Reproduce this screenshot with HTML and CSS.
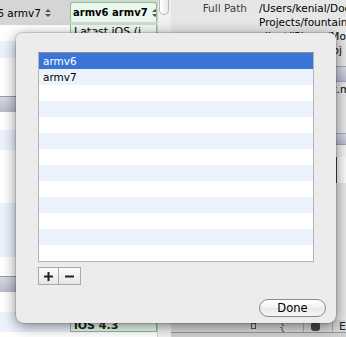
FILE: index.html
```html
<!DOCTYPE html>
<html>
<head>
<meta charset="utf-8">
<link rel="stylesheet" href="styles.css">
</head>
<body>
<div class="window">
  <div class="table">
    <div class="row r-top">
      <div class="c1"><span class="clip">6 armv7</span><svg class="ud" width="6" height="10" viewBox="0 0 6 10"><path d="M0 4 L3 1 L6 4Z M0 6 L3 9 L6 6Z" fill="#555"/></svg></div>
      <div class="c2"><div class="popup"><span>armv6 armv7</span><svg class="ud" width="6" height="10" viewBox="0 0 6 10"><path d="M0 4 L3 1 L6 4Z M0 6 L3 9 L6 6Z" fill="#555"/></svg></div></div>
    </div>
    <div class="row white h16"><div class="c1"></div><div class="c2"><div class="gcell">Latest iOS (i<svg class="chev" width="18" height="8" viewBox="0 0 18 8"><path d="M0.5 8 L9 1 L17.5 8" fill="#fff" stroke="#9a9a9a"/></svg></div></div></div>
    <div class="row blue h17"></div>
    <div class="row white h38"></div>
    <div class="row hdr h16"></div>
    <div class="row white h18"></div>
    <div class="row blue h20"></div>
    <div class="row white h53"></div>
    <div class="row blue h54"></div>
    <div class="row white h19"></div>
    <div class="row hdr h16"></div>
    <div class="row white h20"></div>
    <div class="row blue h20"><div class="c1"></div><div class="c2"><div class="gcell low">iOS 4.3</div></div></div>
    <div class="row white h5"></div>
  </div>
  <div class="vscroll"><div class="knob"></div></div>
  <div class="info">
    <div class="line"><span class="lbl">Full Path</span><span class="val">/Users/kenial/Documents/</span></div>
    <div class="line"><span class="lbl"></span><span class="val">Projects/fountain/</span></div>
    <div class="line"><span class="lbl"></span><span class="val">client/iPhone/Mo</span></div>
    <div class="line"><span class="lbl"></span><span class="val">ile/fountain.proj</span></div>
    <div class="sect"></div>
    <div class="line"><span class="lbl"></span><span class="val">fountain_client.m</span></div>
    <div class="gap"></div>
    <div class="sect short"></div>
    <div class="gap2"></div>
    <div class="field"></div>
    <div class="toolbar">
      <span class="tb sq"></span>
      <span class="tb br">{ }</span>
      <span class="sep"></span>
      <span class="tb dk"></span>
      <span class="sep"></span>
      <span class="tb e">E</span>
    </div>
    <div class="bottombar"></div>
  </div>
</div>

<div class="sheet">
  <div class="list">
    <div class="item sel">armv6</div>
    <div class="item">armv7</div>
    <div class="item"></div>
    <div class="item"></div>
    <div class="item"></div>
    <div class="item"></div>
    <div class="item"></div>
    <div class="item"></div>
    <div class="item"></div>
    <div class="item"></div>
    <div class="item"></div>
    <div class="item"></div>
    <div class="item"></div>
  </div>
  <div class="pm">
    <button class="pmb"><svg width="9" height="9" viewBox="0 0 9 9"><path d="M0 4.5H9M4.5 0V9" stroke="#222" stroke-width="2"/></svg></button>
    <button class="pmb"><svg width="9" height="9" viewBox="0 0 9 9"><path d="M0 4.5H9" stroke="#222" stroke-width="2"/></svg></button>
  </div>
  <div class="footer">
    <button class="done">Done</button>
  </div>
</div>
</body>
</html>
```
FILE: styles.css
```css
* { box-sizing: border-box; }
html, body { margin: 0; padding: 0; }
body {
  width: 346px;
  height: 337px;
  overflow: hidden;
  position: relative;
  font-family: "Lucida Grande", "DejaVu Sans", sans-serif;
  font-size: 10.5px;
  color: #000;
  background: #e6e6e6;
}
.window {
  display: grid;
  grid-template-columns: 157px 14px 175px;
  height: 337px;
}
.table { display: flex; flex-direction: column; overflow: hidden; }
.row { display: flex; flex: none; }
.row .c1 { width: 70px; flex: none; }
.row .c2 { width: 87px; flex: none; }
.white { background: #fff; }
.blue { background: #edf3fe; }
.hdr { background: linear-gradient(#d8d9e4, #b9bbcc); border-top: 1px solid #9a9aa4; }
.h5 { height: 5px; } .h16 { height: 16px; } .h17 { height: 17px; } .h18 { height: 18px; }
.h19 { height: 19px; } .h20 { height: 20px; } .h38 { height: 38px; } .h53 { height: 53px; } .h54 { height: 54px; }

.r-top { height: 25px; background: #d5d5d5; align-items: center; }
.r-top .c1 { display: flex; align-items: center; justify-content: flex-end; padding-right: 19px; overflow: hidden; white-space: nowrap; font-size: 10.5px; }
.r-top .c2 { height: 25px; padding-top: 2px; }
.ud { margin-left: 4px; flex: none; }
.popup {
  height: 20px;
  border: 1px solid #7ec88e;
  border-bottom: none;
  border-radius: 3px 3px 0 0;
  background: #e9f6ea;
  display: flex; align-items: center;
  padding-left: 2px;
  font-size: 10px; font-weight: bold;
  white-space: nowrap;
  overflow: hidden;
}
.gcell {
  height: 100%;
  border-left: 1px solid #7ec88e;
  border-right: 1px solid #7ec88e;
  background: #f1faf1;
  padding-left: 3px;
  font-size: 11px;
  white-space: nowrap;
  overflow: hidden;
  position: relative;
}
.gcell.low { border: 1px solid #7ec88e; padding-top: 6px; color: #222; font-weight: bold; }
.chev { position: absolute; left: 12px; top: 3px; }

.vscroll { background: #f0f0f0; border-left: 1px solid #cfcfcf; }
.knob { margin: 0 2px 0 1px; height: 15px; border: 1px solid #b9b9b9; border-top: none; border-radius: 0 0 6px 6px; background: linear-gradient(90deg, #fff, #e9e9e9); }

.info { display: flex; flex-direction: column; background: #e6e6e6; padding-top: 1px; }
.line { display: flex; height: 14px; line-height: 14px; white-space: nowrap; overflow: hidden; }
.lbl { width: 88px; flex: none; text-align: right; color: #3c3c3c; padding-right: 12px; }
.val { color: #000; }
.sect { height: 16px; margin-top: 9px; background: linear-gradient(#d6d8e6, #b8bbd0); border-top: 1px solid #a3a5b8; border-bottom: 1px solid #9fa1b4; }
.sect.short { height: 12px; }
.gap { height: 28px; }
.gap2 { height: 12px; background: #f2f2f2; }
.field { height: 26px; border-left: 2px solid #444; margin-left: 164px; background: #fafafa; }
.toolbar { margin-top: auto; height: 12px; display: flex; align-items: center; padding-left: 80px; background: #d9d9d9; }
.tb { font-size: 10px; color: #555; }
.sq { width: 6px; height: 6px; border: 1.5px solid #555; margin-right: 23px; }
.br { margin-right: 12px; }
.sep { width: 1px; height: 12px; background: #aaa; }
.dk { width: 12px; height: 9px; background: #4a4a4a; border-radius: 3px; margin: 0 12px 0 7px; }
.e { margin-left: 6px; font-size: 11px; color: #222; }
.bottombar { height: 5px; background: #cfcfcf; border-top: 1px solid #999; }

/* Sheet */
.sheet {
  position: absolute;
  left: 16px; top: 33px;
  width: 320px; height: 290px;
  background: #ececec;
  border-radius: 6px 6px 8px 8px;
  box-shadow: 0 3px 14px rgba(0,0,0,0.5), 0 0 0 1px rgba(0,0,0,0.12);
  padding: 19px 10px 6px 22px;
  display: flex; flex-direction: column;
}
.list {
  width: 276px;
  height: 210px;
  border: 1px solid #b4b4b4;
  border-top-color: #8e8e8e;
  background: #fff;
  display: flex; flex-direction: column;
  overflow: hidden;
}
.item {
  height: 16px; flex: none;
  line-height: 16px;
  padding-left: 4px;
  font-size: 10.5px;
}
.item:nth-child(even) { background: #edf3fe; }
.item.sel { background: #3875d7; color: #fff; }
.pm { display: flex; margin-top: 5px; }
.pmb {
  width: 21px; height: 18px;
  border: 1px solid #a9a9a9;
  background: linear-gradient(#fdfdfd, #e6e6e6);
  padding: 0; margin: 0;
  display: flex; align-items: center; justify-content: center;
}
.pmb + .pmb { border-left: none; width: 22px; }
.footer { margin-top: auto; display: flex; justify-content: flex-end; }
.done {
  width: 67px; height: 18px;
  border: 1px solid #8a8a8a;
  border-radius: 9px;
  background: linear-gradient(#ffffff, #f1f1f1 50%, #e9e9e9 51%, #f6f6f6);
  font-family: "Lucida Grande", "DejaVu Sans", sans-serif;
  font-size: 11.5px;
  color: #000;
  padding: 0;
  line-height: 16px;
}
```
